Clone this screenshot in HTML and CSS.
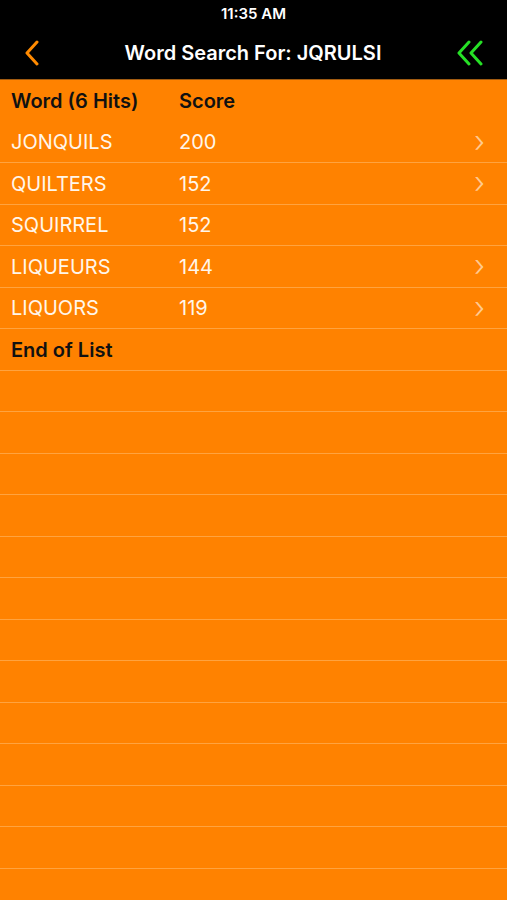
FILE: index.html
```html
<!DOCTYPE html>
<html>
<head>
<meta charset="utf-8">
<link rel="stylesheet" href="styles.css">
</head>
<body>
<div class="top">
  <div class="status">11:35 AM</div>
  <div class="nav">
    <svg class="back" width="20" height="26" viewBox="0 0 20 26"><path d="M14 2 L4 13 L14 24" fill="none" stroke="#ff8a00" stroke-width="3" stroke-linecap="round" stroke-linejoin="round"/></svg>
    <div class="title">Word Search For: JQRULSI</div>
    <svg class="dbl" width="32" height="26" viewBox="0 0 32 26"><path d="M14 2 L4 13 L14 24 M26 2 L16 13 L26 24" fill="none" stroke="#26e026" stroke-width="3" stroke-linecap="round" stroke-linejoin="round"/></svg>
  </div>
</div>
<div class="list">
  <div class="row head"><span class="word">Word (6 Hits)</span><span class="score">Score</span></div>
  <div class="row"><span class="word">JONQUILS</span><span class="score">200</span><span class="chev">›</span></div>
  <div class="row"><span class="word">QUILTERS</span><span class="score">152</span><span class="chev">›</span></div>
  <div class="row"><span class="word">SQUIRREL</span><span class="score">152</span></div>
  <div class="row"><span class="word">LIQUEURS</span><span class="score">144</span><span class="chev">›</span></div>
  <div class="row"><span class="word">LIQUORS</span><span class="score">119</span><span class="chev">›</span></div>
  <div class="row head"><span class="word">End of List</span></div>
  <div class="row"></div>
  <div class="row"></div>
  <div class="row"></div>
  <div class="row"></div>
  <div class="row"></div>
  <div class="row"></div>
  <div class="row"></div>
  <div class="row"></div>
  <div class="row"></div>
  <div class="row"></div>
  <div class="row"></div>
  <div class="row"></div>
  <div class="row"></div>
</div>
</body>
</html>
```
FILE: styles.css
```css
html, body {
  margin: 0;
  padding: 0;
  background: #ff8200;
  font-family: Inter, "Noto Sans", sans-serif;
}
.top {
  background: #000;
  height: 80px;
  border-bottom: 1px solid #a05a10;
  box-sizing: border-box;
}
.status {
  height: 28px;
  line-height: 28px;
  text-align: center;
  color: #fff;
  font-size: 15px;
  font-weight: 600;
}
.nav {
  height: 50px;
  display: flex;
  align-items: center;
  justify-content: space-between;
  padding: 0 20px 0 23px;
}
.title {
  color: #fff;
  font-size: 20px;
  font-weight: 600;
  flex: 1;
  text-align: center;
  margin-left: 8px;
  margin-top: 0;
}
.list { display: flex; flex-direction: column; }
.row {
  height: 41.5px;
  box-sizing: border-box;
  border-bottom: 1px solid rgba(255, 225, 180, 0.35);
  display: flex;
  align-items: center;
  padding-left: 11px;
  padding-top: 1px;
  color: #fff6ea;
  font-size: 20px;
  position: relative;
}
.row.head {
  color: #111;
  font-weight: 600;
}
.row:first-child { border-bottom-color: transparent; }
.word { width: 168px; }
.chev {
  position: absolute;
  right: 22px;
  top: 50%;
  transform: translateY(-54%);
  font-size: 30px;
  color: rgba(255, 235, 210, 0.7);
  font-weight: 300;
}
```
